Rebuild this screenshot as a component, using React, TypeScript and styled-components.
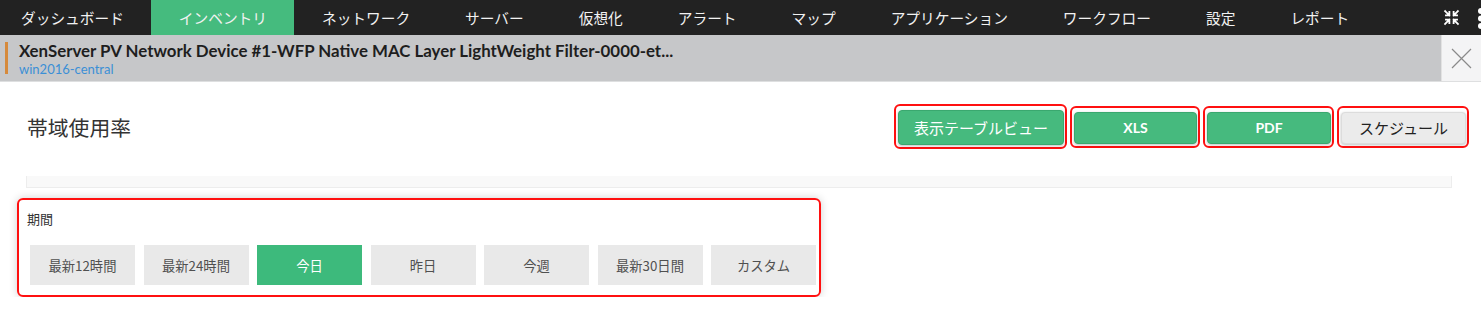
import React from "react";
import styled, { createGlobalStyle } from "styled-components";

const GlobalStyle = createGlobalStyle`
  html, body {
    margin: 0;
    background: #fff;
    overflow: hidden;
    font-family: "Lato", "Noto Sans CJK JP", sans-serif;
  }
`;

const navItems = [
  "ダッシュボード",
  "インベントリ",
  "ネットワーク",
  "サーバー",
  "仮想化",
  "アラート",
  "マップ",
  "アプリケーション",
  "ワークフロー",
  "設定",
  "レポート",
];

const periods = ["最新12時間", "最新24時間", "今日", "昨日", "今週", "最新30日間", "カスタム"];

const Page = styled.div`
  width: 100%;
  overflow: hidden;
`;

const NavBar = styled.nav`
  display: flex;
  align-items: stretch;
  height: 35px;
  background: #222222;
  overflow: hidden;
`;

const NavItem = styled.div<{ $active?: boolean }>`
  display: flex;
  align-items: center;
  padding: 0 27.5px 1px;
  font-family: "Noto Sans CJK JP", sans-serif;
  font-size: 14.7px;
  color: #f2f2f2;
  white-space: nowrap;
  background: ${(p) => (p.$active ? "#45bb7e" : "transparent")};
  &:first-child {
    padding-left: 21px;
  }
`;

const NavTools = styled.div`
  margin-left: auto;
  display: flex;
  align-items: center;
  gap: 16px;
  margin-right: -5px;
  color: #fff;
`;

const InfoBar = styled.header`
  display: flex;
  align-items: stretch;
  height: 46px;
  background: #c6c7c9;
  border-bottom: 1px solid #dedfe0;
`;

const Accent = styled.div`
  align-self: center;
  width: 3px;
  height: 32px;
  margin-left: 5px;
  background: #d68a3c;
`;

const InfoText = styled.div`
  flex: 1;
  display: flex;
  flex-direction: column;
  justify-content: center;
  padding-left: 11px;
`;

const DeviceName = styled.div`
  font-family: "Lato", sans-serif;
  font-weight: 700;
  font-size: 16.85px;
  line-height: 21px;
  color: #1e1e1e;
  white-space: nowrap;
`;

const HostName = styled.div`
  font-family: "Lato", sans-serif;
  font-size: 13px;
  line-height: 16px;
  color: #3b8fd6;
`;

const CloseButton = styled.div`
  width: 39px;
  display: flex;
  align-items: center;
  justify-content: center;
  background: #f4f4f5;
  border-left: 1px solid #e2e2e2;
`;

const TitleRow = styled.div`
  display: flex;
  align-items: center;
  justify-content: space-between;
  height: 94px;
  padding: 0 12px 5px 27px;
  box-sizing: border-box;
`;

const PageTitle = styled.h1`
  margin: 0;
  font-family: "Noto Sans CJK JP", sans-serif;
  font-weight: 400;
  font-size: 20.8px;
  color: #333;
`;

const Actions = styled.div`
  display: flex;
  align-items: center;
  gap: 3px;
`;

const Highlight = styled.div`
  display: flex;
  padding: 4px 1px 2px 2px;
  border: 2px solid #ff1010;
  border-radius: 6px;
`;

const ActionButton = styled.button<{ $green?: boolean; $w: number; $h: number }>`
  width: ${(p) => p.$w}px;
  height: ${(p) => p.$h}px;
  border-radius: 4px;
  border: 1px solid ${(p) => (p.$green ? "#3aa86f" : "#dcdcdc")};
  background: ${(p) => (p.$green ? "#46ba7e" : "#ebebeb")};
  color: ${(p) => (p.$green ? "#fff" : "#222")};
  box-shadow: 0 1px 3px rgba(0, 0, 0, 0.25);
  font-family: "Lato", "Noto Sans CJK JP", sans-serif;
  font-size: ${(p) => (p.$green ? "14px" : "15px")};
  font-weight: ${(p) => (p.$green ? 700 : 400)};
  cursor: pointer;
  padding: 0;
`;

const WideAction = styled(ActionButton)`
  font-size: 15px;
  font-weight: 400;
`;

const Strip = styled.div`
  height: 11px;
  margin: 0 29px 0 26px;
  background: #f9f9f9;
  border: 1px solid #ededed;
  border-top: none;
`;

const PeriodBox = styled.section`
  box-sizing: border-box;
  width: 804px;
  margin: 10px 0 0 17px;
  padding: 10px 3px 10px 8px;
  border: 2px solid #ff1010;
  border-radius: 6px;
  box-shadow: 0 0 8px rgba(0, 0, 0, 0.18);
`;

const PeriodLabel = styled.div`
  font-family: "Noto Sans CJK JP", sans-serif;
  font-size: 13px;
  line-height: 18px;
  color: #333;
`;

const PeriodRow = styled.div`
  display: flex;
  gap: 8.5px;
  margin-top: 17px;
  padding-left: 3px;
`;

const PeriodButton = styled.div<{ $active?: boolean }>`
  flex: none;
  width: 105px;
  height: 40px;
  display: flex;
  align-items: center;
  justify-content: center;
  font-family: "Noto Sans CJK JP", sans-serif;
  font-size: 13.3px;
  color: ${(p) => (p.$active ? "#fff" : "#505050")};
  background: ${(p) => (p.$active ? "#3dba7c" : "#e9e9e9")};
`;

function ShrinkIcon() {
  return (
    <svg width="17" height="17" viewBox="0 0 24 24" fill="none" stroke="currentColor" strokeWidth="2.6" strokeLinecap="square">
      <path d="M15 15l6 6M15 15v4.8M15 15h4.8" />
      <path d="M9 15l-6 6M9 15v4.8M9 15H4.2" />
      <path d="M15 9l6-6M15 9V4.2M15 9h4.8" />
      <path d="M9 9L3 3M9 9V4.2M9 9H4.2" />
    </svg>
  );
}

function DotsIcon() {
  return (
    <svg width="10" height="24" viewBox="0 0 10 24" fill="currentColor">
      <circle cx="5" cy="5" r="3" />
      <circle cx="5" cy="12.5" r="3" />
      <circle cx="5" cy="20" r="3" />
    </svg>
  );
}

function CloseIcon() {
  return (
    <svg width="21" height="21" viewBox="0 0 21 21" stroke="#8a8a8a" strokeWidth="1.2">
      <path d="M1 1l19 19M20 1L1 20" />
    </svg>
  );
}

export default function App() {
  return (
    <Page>
      <GlobalStyle />
      <NavBar>
        {navItems.map((item) => (
          <NavItem key={item} $active={item === "インベントリ"}>
            {item}
          </NavItem>
        ))}
        <NavTools>
          <ShrinkIcon />
          <DotsIcon />
        </NavTools>
      </NavBar>
      <InfoBar>
        <Accent />
        <InfoText>
          <DeviceName>XenServer PV Network Device #1-WFP Native MAC Layer LightWeight Filter-0000-et...</DeviceName>
          <HostName>win2016-central</HostName>
        </InfoText>
        <CloseButton>
          <CloseIcon />
        </CloseButton>
      </InfoBar>
      <TitleRow>
        <PageTitle>帯域使用率</PageTitle>
        <Actions>
          <Highlight>
            <WideAction $green $w={166} $h={35}>
              表示テーブルビュー
            </WideAction>
          </Highlight>
          <Highlight>
            <ActionButton $green $w={123} $h={32}>XLS</ActionButton>
          </Highlight>
          <Highlight>
            <ActionButton $green $w={124} $h={32}>PDF</ActionButton>
          </Highlight>
          <Highlight>
            <ActionButton $w={125} $h={32}>スケジュール</ActionButton>
          </Highlight>
        </Actions>
      </TitleRow>
      <Strip />
      <PeriodBox>
        <PeriodLabel>期間</PeriodLabel>
        <PeriodRow>
          {periods.map((p) => (
            <PeriodButton key={p} $active={p === "今日"}>
              {p}
            </PeriodButton>
          ))}
        </PeriodRow>
      </PeriodBox>
    </Page>
  );
}
